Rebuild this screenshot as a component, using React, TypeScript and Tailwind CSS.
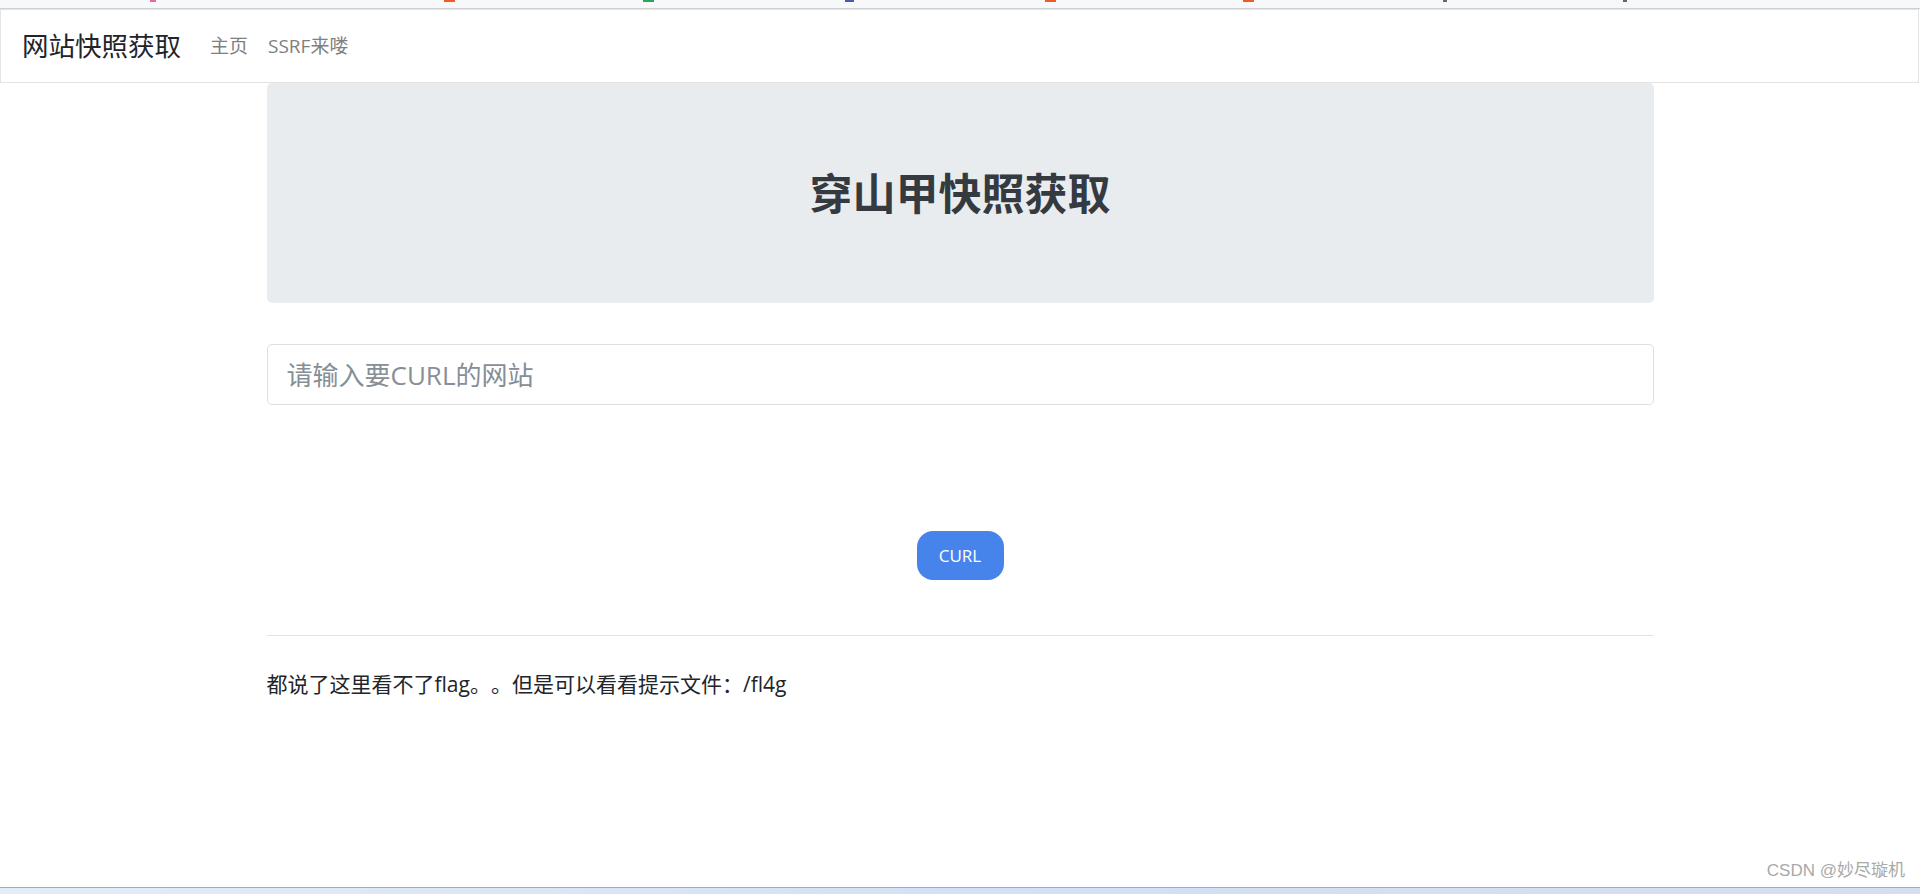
const font = "font-['Open_Sans','Noto_Sans_CJK_SC',sans-serif]"

function TopStrip() {
  // cut-off browser tab icons peeking at the very top
  const marks = [
    { left: 'ml-[150px]', color: 'bg-[#e8679c]', w: 'w-[6px]' },
    { left: 'ml-[288px]', color: 'bg-[#f05a2b]', w: 'w-[11px]' },
    { left: 'ml-[188px]', color: 'bg-[#2aa35b]', w: 'w-[11px]' },
    { left: 'ml-[191px]', color: 'bg-[#4a5aa8]', w: 'w-[9px]' },
    { left: 'ml-[191px]', color: 'bg-[#f05a2b]', w: 'w-[11px]' },
    { left: 'ml-[187px]', color: 'bg-[#f05a2b]', w: 'w-[11px]' },
    { left: 'ml-[189px]', color: 'bg-[#666]', w: 'w-[4px]' },
    { left: 'ml-[176px]', color: 'bg-[#666]', w: 'w-[4px]' },
  ]
  return (
    <div className="h-[9px] bg-[#f7f8fa] border-b border-[#cfd0d3] flex items-start">
      {marks.map((m, i) => (
        <span key={i} className={`${m.left} ${m.color} ${m.w} h-[2px] block`} />
      ))}
    </div>
  )
}

function Navbar() {
  return (
    <nav className="h-[74px] mr-[1px] border border-[#e3e3e3] bg-white flex items-center pl-[21px]">
      <span className="text-[26.5px] text-[#212529] leading-none mr-[19px]">网站快照获取</span>
      <a className="px-[10px] text-[19px] text-[#808080] leading-none">主页</a>
      <a className="px-[10px] text-[19px] text-[#808080] leading-none">SSRF来喽</a>
    </nav>
  )
}

export default function App() {
  return (
    <div className={`${font} bg-white min-h-[894px] flex flex-col`}>
      <TopStrip />
      <Navbar />

      <main className="w-[1387px] mx-auto flex flex-col">
        {/* Jumbotron */}
        <div className="h-[220px] bg-[#e9ecef] rounded-[5px] flex items-center justify-center">
          <h1 className="text-[43px] font-bold text-[#343a40] leading-none">穿山甲快照获取</h1>
        </div>

        {/* URL input */}
        <input
          type="text"
          placeholder="请输入要CURL的网站"
          className="mt-[41px] h-[61px] w-full border border-[#dcdfe3] rounded-[5px] px-[19px] text-[26px] text-[#495057] placeholder:text-[#868e96] outline-none"
        />

        {/* Submit */}
        <div className="mt-[126px] flex justify-center">
          <button className="w-[87px] h-[49px] rounded-[16px] bg-[#4684ec] text-white text-[17px]">
            CURL
          </button>
        </div>

        <hr className="mt-[55px] border-0 border-t border-[#e1e3e6]" />

        <p className="mt-[34px] text-[21px] text-[#212529] leading-[28px] [text-spacing-trim:space-all]">
          都说了这里看不了flag。。但是可以看看提示文件：/fl4g
        </p>
      </main>

      <div className="flex-1" />

      {/* watermark */}
      <div className="flex justify-end pr-[15px] pb-[4px]">
        <span className="text-[17px] text-[#a9a9a9] font-['Liberation_Sans','Noto_Sans_CJK_SC',sans-serif] [text-shadow:0_0_1px_#fff]">
          CSDN @妙尽璇机
        </span>
      </div>

      {/* taskbar edge */}
      <div className="h-[7px] border-t border-[#a7aab0] bg-gradient-to-r from-[#e4ecf6] via-[#d3e0f7] to-[#d6ddf3]" />
    </div>
  )
}
